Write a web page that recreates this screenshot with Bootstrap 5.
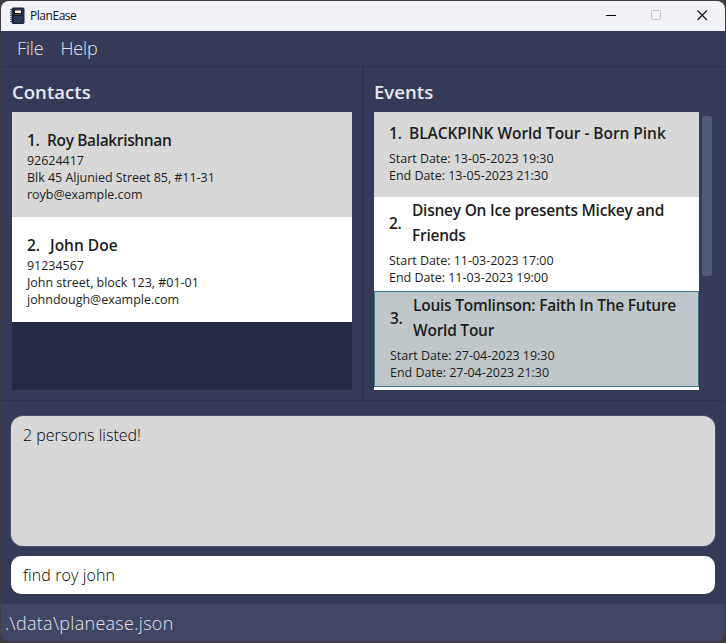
<!DOCTYPE html>
<html lang="en">
<head>
<meta charset="utf-8">
<title>PlanEase</title>
<link href="https://cdn.jsdelivr.net/npm/bootstrap@5.3.0/dist/css/bootstrap.min.css" rel="stylesheet">
<style>
body{width:726px;height:643px;background:#403d40;font-family:"Open Sans","Noto Sans",sans-serif;color:#1d1d1d;padding:1px;white-space:nowrap}
.window{width:724px;height:641px;background:#353b57;border-radius:8px}
.titlebar{height:30px;background:#f2f2f9;color:#111;font-size:12px;letter-spacing:-.46px}
.titlebar .app-icon{margin:0 5px 0 9px}
.menubar{height:36px;border-bottom:1px solid #2b3150;font-size:18px;font-weight:300;color:#e2e4ea;padding-left:16px;gap:17px;letter-spacing:-.15px}
.panes{height:334px;border-bottom:1px solid #2b3150}
.pane{padding:8px 0 0 11px}
.pane-left{width:361px}
.pane-right{border-left:2px solid #2d3350;padding-left:10px}
.pane-title{font-size:18.5px;font-weight:600;line-height:34px;height:37px;color:#e6e7ee;letter-spacing:.05px}
.listing{height:278px;background:#242943}
.people{width:340px}
.events{width:325px;background:#fff}
.person{height:105px;padding:15px 15px 0;background:#fff}
.odd-row{background:#d8d8d8}
.entry-name{font-size:15.5px;font-weight:600;line-height:25px;letter-spacing:-.24px;padding-top:1px;margin-bottom:-1px}
.person .entry-name{letter-spacing:0}
.person.odd-row .entry-name{letter-spacing:-.36px}
.event.first .entry-name{letter-spacing:-.05px}
.num{width:23px}
.num-one{width:20px}
.detail{font-size:12.5px;line-height:17px;letter-spacing:-.03px}
.event{padding:0 15px;background:#fff;height:94px}
.event.first{height:85px;padding-top:8px;background:#d8d8d8}
.event .entry-name{margin-bottom:4px}
.event.chosen{height:96px;border:1px solid #3d7b8b;background:#bfc7ca}
.thumb{width:10px;height:160px;border-radius:3px;background:#515979;margin:4px 0 0 3px}
.result{height:130px;margin:15px 10px 0;border-radius:12px;background:#d8d8d8;padding:7px 12px;font-size:16px;font-weight:300;color:#000;box-shadow:0 0 0 1px #4a506c}
.command{height:38px;margin:10px 10px 0;border-radius:10px;background:#fff;padding:0 12px;font-size:16px;font-weight:300;color:#000;letter-spacing:.12px}
.footer-bar{height:38px;margin-top:10px;background:#414662;border-radius:0 0 8px 8px;font-size:18px;font-weight:300;color:#e2e4ea;padding-left:4px;letter-spacing:.28px}
</style>
</head>
<body>
<main class="window d-flex flex-column overflow-hidden">
  <header class="titlebar d-flex align-items-center flex-shrink-0">
    <svg class="app-icon" width="15" height="18" viewBox="0 0 15 18"><rect x="2" y="1" width="12" height="15.500" rx="1" fill="#2b3556" stroke="#1c1f2c"/><path d="M1 2v14" stroke="#2f6670" stroke-width="2" stroke-dasharray="1 1"/><path d="M3.500 1v15.500" stroke="#1c2238"/><rect x="4" y="3" width="8" height="6" fill="#17181d"/><rect x="5" y="3.500" width="6" height="2.500" fill="#fff5e0"/><path d="M5 7.500h6" stroke="#5b5a5c"/></svg>
    <span>PlanEase</span>
    <svg class="ms-auto" width="120" height="30" viewBox="0 0 120 30" fill="none"><path d="M1 14.500h10" stroke="#000"/><rect x="46.500" y="9.500" width="9" height="9" rx="1" stroke="#c4c4ca"/><path d="M92.500 9.500l9.500 9.500M102 9.500l-9.500 9.500" stroke="#111" stroke-width="1.100"/></svg>
  </header>
  <nav class="menubar d-flex align-items-center flex-shrink-0"><span>File</span><span>Help</span></nav>
  <section class="panes d-flex flex-shrink-0">
    <div class="pane pane-left">
      <div class="pane-title">Contacts</div>
      <div class="listing people">
        <article class="person odd-row">
          <div class="entry-name d-flex"><span class="num num-one">1.</span><span>Roy Balakrishnan</span></div>
          <div class="detail">92624417</div><div class="detail">Blk 45 Aljunied Street 85, #11-31</div><div class="detail">royb@example.com</div>
        </article>
        <article class="person">
          <div class="entry-name d-flex"><span class="num">2.</span><span>John Doe</span></div>
          <div class="detail">91234567</div><div class="detail">John street, block 123, #01-01</div><div class="detail">johndough@example.com</div>
        </article>
      </div>
    </div>
    <div class="pane pane-right flex-grow-1">
      <div class="pane-title">Events</div>
      <div class="d-flex">
        <div class="listing events">
          <article class="event first">
            <div class="entry-name d-flex"><span class="num num-one">1.</span><span>BLACKPINK World Tour - Born Pink</span></div>
            <div class="detail">Start Date: 13-05-2023 19:30</div><div class="detail">End Date: 13-05-2023 21:30</div>
          </article>
          <article class="event">
            <div class="entry-name d-flex align-items-center"><span class="num">2.</span><span>Disney On Ice presents Mickey and<br>Friends</span></div>
            <div class="detail">Start Date: 11-03-2023 17:00</div><div class="detail">End Date: 11-03-2023 19:00</div>
          </article>
          <article class="event chosen">
            <div class="entry-name d-flex align-items-center"><span class="num">3.</span><span>Louis Tomlinson: Faith In The Future<br>World Tour</span></div>
            <div class="detail">Start Date: 27-04-2023 19:30</div><div class="detail">End Date: 27-04-2023 21:30</div>
          </article>
        </div>
        <div class="thumb"></div>
      </div>
    </div>
  </section>
  <section class="result flex-shrink-0">2 persons listed!</section>
  <section class="command d-flex align-items-center flex-shrink-0">find roy john</section>
  <footer class="footer-bar d-flex align-items-center flex-shrink-0">.\data\planease.json</footer>
</main>
<script src="https://cdn.jsdelivr.net/npm/bootstrap@5.3.0/dist/js/bootstrap.bundle.min.js"></script>
</body>
</html>
